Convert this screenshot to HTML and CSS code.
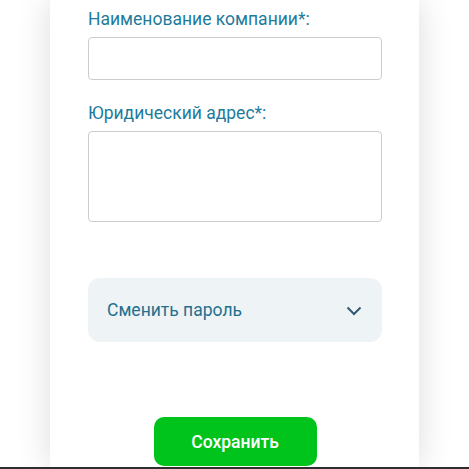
FILE: index.html
```html
<!DOCTYPE html>
<html lang="ru">
<head>
<meta charset="utf-8">
<link rel="stylesheet" href="styles.css">
</head>
<body>
<div class="page">
  <form class="card">
    <label class="field">
      <span class="label">Наименование компании*:</span>
      <input class="input" type="text">
    </label>
    <label class="field field-second">
      <span class="label">Юридический адрес*:</span>
      <textarea class="textarea"></textarea>
    </label>
    <div class="accordion">
      <span class="accordion-title">Сменить пароль</span>
      <svg class="chevron" width="16" height="10" viewBox="0 0 16 10"><path d="M1.5 1.5 L8 8 L14.5 1.5" fill="none" stroke="#2f5b70" stroke-width="2"/></svg>
    </div>
    <div class="actions">
      <button class="save" type="button">Сохранить</button>
    </div>
  </form>
</div>
<div class="footer-line"></div>
</body>
</html>
```
FILE: styles.css
```css
* { box-sizing: border-box; }
html, body { margin: 0; padding: 0; background: #fff; }
body { font-family: Roboto, "Liberation Sans", sans-serif; overflow: hidden; }
.page {
  height: 467px;
  display: flex;
  justify-content: center;
  overflow: hidden;
}
.card {
  width: 369px;
  background: #fff;
  box-shadow: 0 0 32px rgba(0, 0, 0, 0.14);
  padding: 9px 37px 0 38px;
  display: flex;
  flex-direction: column;
}
.field { display: flex; flex-direction: column; }
.field-second { margin-top: 23px; }
.label {
  font-size: 17.5px;
  line-height: 20px;
  color: #1d7b9c;
  margin-bottom: 8px;
}
.input {
  height: 43px;
  border: 1px solid #cccccc;
  border-radius: 4px;
  background: #fff;
  font: inherit;
}
.textarea {
  height: 91px;
  border: 1px solid #cccccc;
  border-radius: 4px;
  background: #fff;
  font: inherit;
  resize: none;
}
.accordion {
  margin-top: 56px;
  height: 64px;
  background: #eef3f6;
  border-radius: 12px;
  display: flex;
  align-items: center;
  justify-content: space-between;
  padding: 0 20px 0 19px;
}
.accordion-title {
  font-size: 17.5px;
  color: #22708e;
}
.chevron { display: block; margin-top: 2px; }
.actions {
  margin-top: 75px;
  display: flex;
  justify-content: center;
}
.save {
  width: 163px;
  height: 49px;
  border: none;
  border-radius: 10px;
  background: #00c41c;
  color: #fff;
  font-family: Roboto, "Liberation Sans", sans-serif;
  font-size: 17.5px;
  font-weight: 500;
}
.footer-line { height: 2px; background: #2e2e2e; }
```
